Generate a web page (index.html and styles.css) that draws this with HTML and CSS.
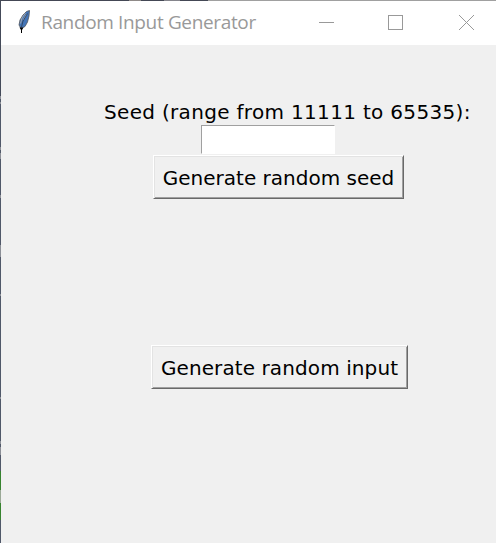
FILE: index.html
```html
<!DOCTYPE html>
<html lang="en">
<head>
<meta charset="utf-8">
<title>Random Input Generator</title>
<link rel="stylesheet" href="styles.css">
</head>
<body>
<div class="desktop-top"></div>
<div class="frame">
  <div class="desktop-edge"></div>
  <div class="window">
    <header class="titlebar">
      <svg class="feather" width="16" height="26" viewBox="0 0 16 26">
        <path d="M12.500 1.500 L9.500 2.500 L6 6 L3 11 L2 16 L4 19.500 L8 17.500 L10.500 13 L12 7 Z" fill="#4375b8" stroke="#50545b" stroke-width=".8"/>
        <path d="M8.500 4 L5 9 L3.500 14.500 M9.500 5.500 L6.200 11" fill="none" stroke="#a4a8ad" stroke-width="1"/>
        <path d="M10.500 4.500 L6 12 L4.500 18" fill="none" stroke="#26303f" stroke-width=".7"/>
        <path d="M2.500 18.500 H6.500 L5 21 V24 H4 V21 Z" fill="#000"/>
      </svg>
      <h1 class="title">Random Input Generator</h1>
      <svg class="controls" width="156" height="16" viewBox="0 0 156 16" fill="none" stroke="#999" stroke-width="1">
        <path d="M0 7.5 H15"/>
        <rect x="69.500" y=".5" width="14" height="14"/>
        <path d="M140 0 L155 15 M155 0 L140 15"/>
      </svg>
    </header>
    <main class="content">
      <label class="seed-label" for="seed">Seed (range from 11111 to 65535):</label>
      <input class="seed" id="seed" type="text">
      <button class="button button-seed">Generate random seed</button>
      <button class="button button-input">Generate random input</button>
    </main>
  </div>
</div>
</body>
</html>
```
FILE: styles.css
```css
* { box-sizing: border-box; }
body {
  margin: 0;
  height: 543px;
  overflow: hidden;
  display: flex;
  flex-direction: column;
  background: #f0f0f0;
}
.desktop-top {
  height: 1px;
  flex: none;
  background: linear-gradient(90deg, #444855 129px, #8f8a88 129px 141px, #444855 141px 164px, #85858c 164px 180px, #444855 180px 208px, #a0a0a0 208px);
}
.frame { display: flex; flex: 1; }
.desktop-edge {
  width: 1px;
  background: linear-gradient(#444a59 95px, #8b8e96 95px 98px, #505869 98px 101px, #8b8e96 101px 103px, #505869 103px 146px, #8b8e96 146px 149px, #505869 149px 152px, #8b8e96 152px 158px, #505869 158px 194px, #8b8e96 194px 197px, #505869 197px 244px, #8b8e96 244px 256px, #505869 256px 293px, #8b8e96 293px 295px, #505869 295px 396px, #8b8e96 396px 398px, #505869 398px 440px, #8b8e96 440px 443px, #505869 443px 446px, #8b8e96 446px 454px, #505869 454px 470px, #37832f 470px 489px, #9aa896 489px 502px, #37832f 502px 519px, #505869 519px);
}
.window { flex: 1; }
.titlebar {
  height: 44px;
  display: flex;
  align-items: flex-start;
  background: #fff;
}
.feather { margin: 8px 0 0 16px; }
.title {
  margin: 8px 0 0 8px;
  width: 278px;
  font: 400 19px/27px "Open Sans", "Noto Sans", sans-serif;
  letter-spacing: -0.35px;
  color: #999;
  white-space: nowrap;
}
.controls { margin-top: 14px; }
.content {
  display: flex;
  flex-direction: column;
  align-items: flex-start;
  padding-top: 53px;
  font: 20px/28px "DejaVu Sans", Verdana, sans-serif;
  color: #000;
}
.seed-label {
  margin-left: 103px;
  height: 27px;
  letter-spacing: 0.32px;
  white-space: nowrap;
}
.seed {
  width: 134px;
  height: 29px;
  margin-left: 200px;
  padding: 0 2px;
  border: 1px solid;
  border-color: #a0a0a0 #fff #fff #a0a0a0;
  border-radius: 0;
  background: #fff;
  font: inherit;
  outline: none;
}
.button {
  height: 44px;
  padding: 1px 0 0;
  border: 1px solid;
  border-color: #fff #696969 #696969 #fff;
  border-radius: 0;
  background: #f0f0f0;
  box-shadow: inset 1px 1px #e3e3e3, inset -1px -1px #a0a0a0;
  font: inherit;
  color: inherit;
  white-space: nowrap;
}
.button-seed { width: 251px; margin: 1px 0 0 152px; }
.button-input { width: 257px; margin: 146px 0 0 150px; letter-spacing: 0.1px; }
```
